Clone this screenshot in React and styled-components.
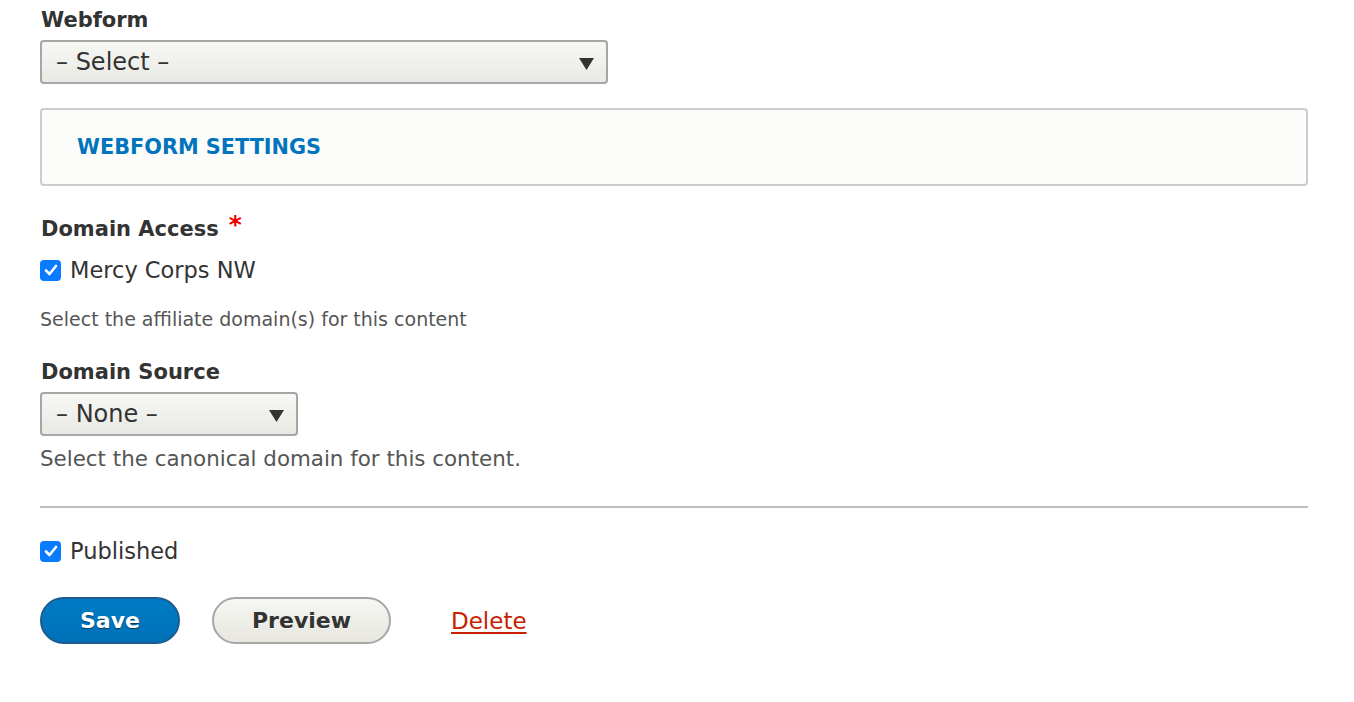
import styled, { createGlobalStyle } from "styled-components";

const GlobalStyle = createGlobalStyle`
  body {
    margin: 0;
    background: #fff;
    font-family: "DejaVu Sans", "Liberation Sans", sans-serif;
    color: #333;
  }
`;

const Page = styled.form`
  padding: 8px 46px 40px 40px;
  display: flex;
  flex-direction: column;
`;

const Field = styled.div`
  display: flex;
  flex-direction: column;
  align-items: flex-start;
  margin-top: ${(p) => p.$mt || 0}px;
`;

const Label = styled.label`
  font-weight: bold;
  font-size: 21px;
  line-height: 24px;
  color: #333;
  margin-left: 1px;
  margin-bottom: ${(p) => p.$mb || 8}px;
`;

const Required = styled.span`
  color: #e00;
  margin-left: 10px;
  font-size: 25px;
  position: relative;
  top: -3px;
`;

const SelectBox = styled.div`
  box-sizing: border-box;
  width: ${(p) => p.$w}px;
  height: 44px;
  border: 2px solid #a6a6a6;
  border-radius: 4px;
  background: linear-gradient(#f7f7f4, #e9e9e4);
  display: flex;
  align-items: center;
  justify-content: space-between;
  padding: 0 12px 0 14px;
  font-size: 24px;
  color: #333;
`;

const Arrow = styled.svg`
  width: 15px;
  height: 12px;
  margin-top: 4px;
`;

const Details = styled.div`
  box-sizing: border-box;
  height: 78px;
  border: 2px solid #ccc;
  border-radius: 4px;
  background: #fcfcfa;
  display: flex;
  align-items: center;
  padding-left: 35px;
  margin: 24px 0 30px;
`;

const Summary = styled.span`
  color: #0074bd;
  font-weight: bold;
  font-size: 20.8px;
  text-transform: uppercase;
`;

const CheckRow = styled.label`
  display: flex;
  align-items: center;
  gap: 9px;
  font-size: 22.5px;
  line-height: 26px;
  color: #333;
`;

const Box = styled.span`
  width: 21px;
  height: 21px;
  border-radius: 4px;
  background: #0a7aff;
  display: flex;
  align-items: center;
  justify-content: center;
`;

const Description = styled.div`
  font-size: ${(p) => p.$size}px;
  color: #555;
  line-height: 26px;
  margin-top: ${(p) => p.$mt || 0}px;
`;

const Rule = styled.hr`
  width: 100%;
  border: none;
  border-top: 2px solid #bebfb9;
  margin: 34px 0 30px;
`;

const Actions = styled.div`
  display: flex;
  align-items: center;
  margin-top: 33px;
`;

const Button = styled.button`
  box-sizing: border-box;
  width: ${(p) => p.$w}px;
  height: 47px;
  padding: 0;
  border-radius: 24px;
  font-family: inherit;
  font-weight: bold;
  font-size: 22px;
  margin-right: ${(p) => p.$mr}px;
  border: 2px solid ${(p) => (p.$primary ? "#1e5c90" : "#a6a6a6")};
  color: ${(p) => (p.$primary ? "#fff" : "#333")};
  background: ${(p) =>
    p.$primary
      ? "linear-gradient(#007bc6, #0071b8)"
      : "linear-gradient(#f6f6f3, #e7e7df)"};
  text-shadow: ${(p) =>
    p.$primary ? "0 1px 1px rgba(0,0,0,0.5)" : "0 1px rgba(255,255,255,0.6)"};
`;

const DeleteLink = styled.a`
  color: #c72100;
  font-size: 23px;
  text-decoration: underline;
  text-underline-offset: 3px;
`;

const Check = () => (
  <Box>
    <svg width="14" height="12" viewBox="0 0 14 12">
      <path d="M2 6.5 L5.5 10 L12 2" fill="none" stroke="#fff" strokeWidth="2.6" strokeLinecap="round" strokeLinejoin="round" />
    </svg>
  </Box>
);

const Select = ({ width, text }) => (
  <SelectBox $w={width}>
    <span>{text}</span>
    <Arrow viewBox="0 0 15 12">
      <path d="M0 0 H15 L7.5 12 Z" fill="#333" />
    </Arrow>
  </SelectBox>
);

export default function App() {
  return (
    <>
      <GlobalStyle />
      <Page>
        <Field>
          <Label>Webform</Label>
          <Select width={568} text="– Select –" />
        </Field>
        <Details>
          <Summary>Webform settings</Summary>
        </Details>
        <Field>
          <Label $mb={16}>
            Domain Access<Required>*</Required>
          </Label>
          <CheckRow>
            <Check />
            Mercy Corps NW
          </CheckRow>
          <Description $size={19} $mt={23}>
            Select the affiliate domain(s) for this content
          </Description>
        </Field>
        <Field $mt={28}>
          <Label>Domain Source</Label>
          <Select width={258} text="– None –" />
          <Description $size={21.4} $mt={10}>
            Select the canonical domain for this content.
          </Description>
        </Field>
        <Rule />
        <CheckRow>
          <Check />
          Published
        </CheckRow>
        <Actions>
          <Button type="button" $primary $w={140} $mr={32}>Save</Button>
          <Button type="button" $w={179} $mr={60}>Preview</Button>
          <DeleteLink href="#">Delete</DeleteLink>
        </Actions>
      </Page>
    </>
  );
}
